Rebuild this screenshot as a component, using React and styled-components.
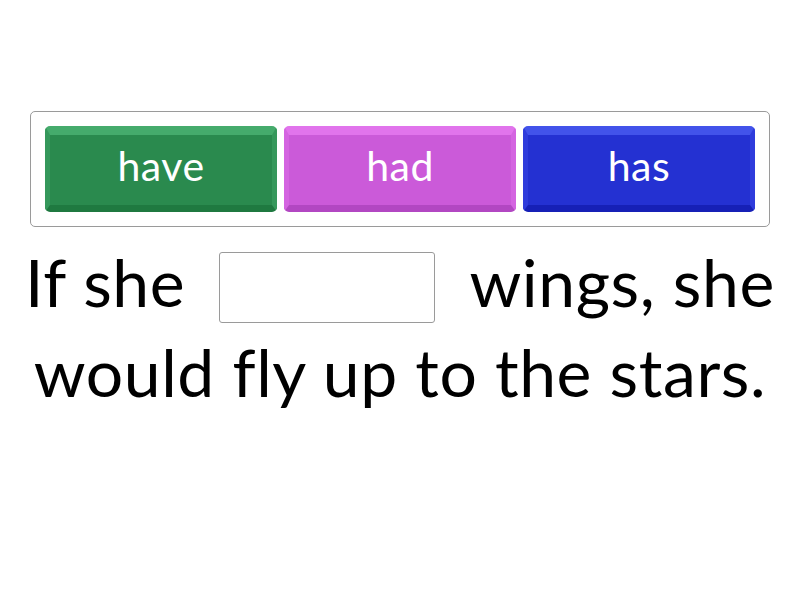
import React from 'react';
import styled, { createGlobalStyle } from 'styled-components';

const GlobalStyle = createGlobalStyle`
  body {
    margin: 0;
    background: #fff;
    font-family: Lato, "Open Sans", sans-serif;
  }
`;

const Page = styled.div`
  width: 800px;
  height: 600px;
  padding-top: 111px;
  box-sizing: border-box;
`;

const Bank = styled.div`
  margin: 0 30px;
  padding: 14px;
  border: 1px solid #9a9a9a;
  border-radius: 5px;
  display: flex;
  gap: 7px;
`;

const palette = {
  green: { main: '#2a8a4e', top: '#45ab6c', side: '#35985b', bottom: '#1f7940' },
  pink: { main: '#cb5ad9', top: '#e174ec', side: '#d464e1', bottom: '#b247c2' },
  blue: { main: '#2431d2', top: '#4253ea', side: '#2f3cdc', bottom: '#1620b6' },
};

const Tile = styled.div`
  flex: 1;
  height: 86px;
  box-sizing: border-box;
  border-radius: 5px;
  border-style: solid;
  border-width: 9px 5px 7px;
  border-color: ${p => palette[p.$tone].top} ${p => palette[p.$tone].side}
    ${p => palette[p.$tone].bottom};
  background: ${p => palette[p.$tone].main};
  color: #fff;
  font-size: 41px;
  letter-spacing: 0.5px;
  display: flex;
  align-items: center;
  justify-content: center;
  padding-bottom: 10px;
`;

const Sentence = styled.div`
  margin-top: 10px;
  text-align: center;
  font-size: 66px;
  letter-spacing: 0.6px;
  line-height: 90px;
  color: #000;
`;

const Blank = styled.span`
  display: inline-block;
  width: 216px;
  height: 71px;
  box-sizing: border-box;
  margin: 0 18px 0 34px;
  border: 1px solid #9a9a9a;
  border-radius: 3px;
  vertical-align: -16px;
`;

export default function App() {
  return (
    <Page>
      <GlobalStyle />
      <Bank>
        <Tile $tone="green">have</Tile>
        <Tile $tone="pink">had</Tile>
        <Tile $tone="blue">has</Tile>
      </Bank>
      <Sentence>
        If she<Blank /> wings, she would fly up to the stars.
      </Sentence>
    </Page>
  );
}
